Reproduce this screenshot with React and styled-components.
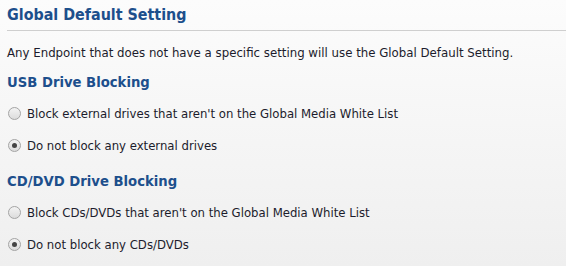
import React from "react";
import styled, { createGlobalStyle } from "styled-components";

const GlobalStyle = createGlobalStyle`
  html, body {
    margin: 0;
    padding: 0;
  }
  body {
    width: 566px;
    height: 266px;
    overflow: hidden;
    font-family: "DejaVu Sans Condensed", "DejaVu Sans", Verdana, sans-serif;
    background: linear-gradient(#fcfcfc, #efefef);
  }
`;

const Panel = styled.div`
  padding: 5px 0 0 7px;
  color: #222;
`;

const Title = styled.h2`
  margin: 0;
  font-size: 15.9px;
  font-weight: bold;
  color: #1d4f8c;
  line-height: 20px;
  padding-bottom: 5px;
  border-bottom: 1px solid #cfcfcf;
`;

const Description = styled.p`
  margin: 0;
  padding-top: 14px;
  font-size: 13.1px;
  line-height: 16px;
  color: #1c1c2c;
`;

const Section = styled.div`
  display: flex;
  flex-direction: column;
`;

const SectionTitle = styled.h3`
  margin: 0;
  padding-top: ${(p) => p.$top}px;
  font-size: 14.7px;
  font-weight: bold;
  color: #1d4f8c;
  line-height: 18px;
`;

const Option = styled.label`
  display: flex;
  align-items: center;
  gap: 6px;
  height: 16px;
  margin-top: ${(p) => p.$top}px;
  font-size: 13px;
  color: #1c1c2c;
`;

const Radio = styled.span`
  position: relative;
  width: 11px;
  height: 11px;
  margin-left: 1px;
  border-radius: 50%;
  border: 1px solid #a4a4a4;
  background: linear-gradient(#f3f3f3, #dcdcdc);
  flex: none;

  &::after {
    content: "";
    display: ${(p) => (p.$checked ? "block" : "none")};
    position: absolute;
    left: 3px;
    top: 3px;
    width: 5px;
    height: 5px;
    border-radius: 50%;
    background: #444;
  }
`;

const sections = [
  {
    title: "USB Drive Blocking",
    top: 12,
    options: [
      { label: "Block external drives that aren't on the Global Media White List", checked: false },
      { label: "Do not block any external drives", checked: true }
    ]
  },
  {
    title: "CD/DVD Drive Blocking",
    top: 19,
    options: [
      { label: "Block CDs/DVDs that aren't on the Global Media White List", checked: false },
      { label: "Do not block any CDs/DVDs", checked: true }
    ]
  }
];

export default function App() {
  return (
    <>
      <GlobalStyle />
      <Panel>
        <Title>Global Default Setting</Title>
        <Description>
          Any Endpoint that does not have a specific setting will use the Global Default Setting.
        </Description>
        {sections.map((s) => (
          <Section key={s.title}>
            <SectionTitle $top={s.top}>{s.title}</SectionTitle>
            {s.options.map((o, i) => (
              <Option key={o.label} $top={i === 0 ? 14 : 16}>
                <Radio $checked={o.checked} />
                {o.label}
              </Option>
            ))}
          </Section>
        ))}
      </Panel>
    </>
  );
}
